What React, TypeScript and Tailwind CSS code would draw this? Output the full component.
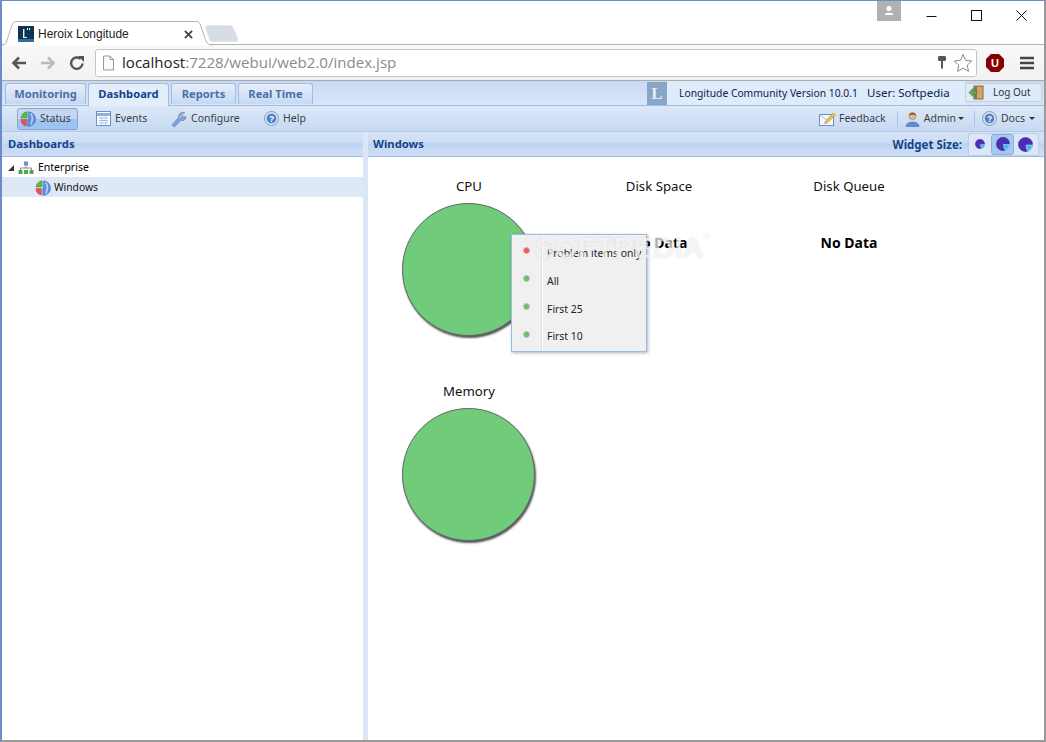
import React from "react";

const F = "[font-family:'Noto_Sans',sans-serif]";
const HEADER =
  "bg-[linear-gradient(#d6e4f7_0%,#cbdcf4_45%,#b9d1f1_50%,#c3d7f3_60%,#cfe0f6_100%)]";

function Pie({ s = 16 }: { s?: number }) {
  return (
    <svg width={s} height={s} viewBox="0 0 16 16" className="shrink-0">
      <path d="M7.2 7 L7.2 .8 A6.6 6.6 0 0 0 .9 7 Z" fill="#58b848" stroke="#3f8f38" strokeWidth="0.4" />
      <path d="M.9 8.4 L6.4 8.4 L6.4 15 A6.8 6.8 0 0 1 .9 8.4 Z" fill="#e4544f" stroke="#b33a38" strokeWidth="0.4" />
      <path d="M8.4 .8 A7.2 7.2 0 0 1 8.4 15.4 Q7.2 15.4 7.6 15 L7.6 8.4 L8.4 7.6 Z" fill="#5d8edb" stroke="#3e6cb0" strokeWidth="0.4" />
      <path d="M10.5 2.5 Q14 6 11 13.5" fill="none" stroke="#bcd3f3" strokeWidth="1.6" />
    </svg>
  );
}

function HelpIcon() {
  return (
    <svg width="15" height="15" viewBox="0 0 15 15" className="shrink-0">
      <circle cx="7.5" cy="7.5" r="7" fill="#d5e1f1" stroke="#7f9cc6" />
      <circle cx="7.5" cy="7.5" r="4.8" fill="#4f80c4" />
      <text x="7.5" y="10.7" fontSize="8.5" fontWeight="700" fill="#fff" textAnchor="middle" fontFamily="Liberation Sans">?</text>
    </svg>
  );
}

function SizeIcon({ s }: { s: number }) {
  return (
    <svg width={s} height={s} viewBox="0 0 16 16">
      <circle cx="8" cy="8" r="7.6" fill="#4b2db8" stroke="#2f2a80" strokeWidth="0.5" />
      <path d="M8.6 8.6 H15.6 A7.4 7.4 0 0 1 10.6 15 Q8.6 13 8.6 8.6 Z" fill="#35bdf2" stroke="#e7f4ff" strokeWidth="0.6" />
    </svg>
  );
}

function Tab({ label, active, w }: { label: string; active?: boolean; w: string }) {
  return (
    <div
      className={`${w} flex justify-center rounded-t-[3px] border border-b-0 border-[#9dbde8] text-[11.2px] leading-[20px] font-bold ${
        active ? "bg-[#e4eefb] h-[23px] text-[#15428b] relative z-10" : "h-[21px] bg-[linear-gradient(#e6eefa,#c6d9f3)] text-[#4b6fa8]"
      }`}
    >
      {label}
    </div>
  );
}

function ToolBtn({ icon, label, active, w }: { icon: React.ReactNode; label: string; active?: boolean; w: string }) {
  return (
    <div
      className={`${w} h-[22px] flex items-center gap-[4px] rounded-[3px] text-[10.5px] text-[#3c3f4a] ${
        active ? "pl-[2px] bg-[linear-gradient(#c3d7f1_50%,#9dc3f0_50%)] border border-[#8aa6cc]" : "pl-[3px]"
      }`}
    >
      {icon}
      {label}
    </div>
  );
}

function Widget({ title, noData }: { title: string; noData?: boolean }) {
  return (
    <div className="w-[190px] h-[205px] flex flex-col items-center pt-[19px]">
      <div className="text-[13.2px] leading-[20px] text-[#111]">{title}</div>
      {noData ? (
        <div className="mt-[37px] text-[14px] leading-[20px] font-bold text-black">No Data</div>
      ) : (
        <div className="mt-[7px] mr-[2px] w-[133px] h-[133px] rounded-full bg-[#70cb7b] border border-[#666] shadow-[1px_2px_2px_#555]" />
      )}
    </div>
  );
}

const menu = [
  { t: "Problem items only", c: "bg-[#ea5a60] border-[#e8a0a4]" },
  { t: "All", c: "bg-[#6fbb6f] border-[#a5d0a5]" },
  { t: "First 25", c: "bg-[#6fbb6f] border-[#a5d0a5]" },
  { t: "First 10", c: "bg-[#6fbb6f] border-[#a5d0a5]" },
];

export default function App() {
  return (
    <div className={`${F} relative w-[1046px] h-[742px] overflow-hidden bg-white flex flex-col border-l-2 border-r-2 border-t border-b-2 border-[#6b8cc6] border-b-[#9a9a9a] border-r-[#9a9a9a]`}>
      {/* title row */}
      <div className="h-[43px] shrink-0 bg-white flex items-end relative">
        <div className="ml-[2px] w-[206px] h-[24px] flex items-center pt-[2px] pl-[14px] pr-[17px] relative -mb-px z-10">
          <svg width="210" height="25" viewBox="0 0 210 25" className="absolute -left-[2px] top-0">
            <path d="M0 24 C3 24 4 22 5 19 L10 4 C11 1 12 .5 15 .5 H194 C196 .5 197 1 198 3 L203 17 C204 21 206 24 210 24" fill="#fff" stroke="#b4b4b4" />
          </svg>
          <svg width="16" height="16" viewBox="0 0 16 16" className="shrink-0 relative">
            <rect width="16" height="16" fill="#0e3550" />
            <rect x="5" y="3" width="1.4" height="9" fill="#cfe" />
            <rect x="5" y="11" width="4" height="1" fill="#cfe" />
            <rect x="9" y="2" width="1" height="2" fill="#cfe" />
            <rect x="11" y="2" width="1" height="2" fill="#cfe" />
            <rect x="0" y="13" width="16" height="3" fill="#2f6f9f" />
          </svg>
          <span className="relative ml-[4px] text-[12px] text-[#222] [font-family:'Liberation_Sans',sans-serif]">Heroix Longitude</span>
          <svg width="9" height="9" viewBox="0 0 10 10" className="relative ml-auto">
            <path d="M1 1 L9 9 M9 1 L1 9" stroke="#444" strokeWidth="2" />
          </svg>
        </div>
        <svg width="34" height="18" viewBox="0 0 34 18" className="absolute left-[202px] top-[24px]">
          <path d="M3 .5 H26 Q28 .5 29 3 L34 14 Q35 16.5 32 16.5 H8 Q6 16.5 5.5 14 L2 3 Q1.5 .5 3 .5 Z" fill="#d6dbe4" stroke="#e2e5ea" />
        </svg>
        <div className="absolute right-[143px] top-0 w-[24px] h-[20px] bg-[#b1b1b1] flex items-center justify-center">
          <svg width="12" height="12" viewBox="0 0 12 12">
            <circle cx="6" cy="3.5" r="2.5" fill="#fff" />
            <path d="M1.5 10 C2 7 10 7 10.5 10 Z" fill="#fff" />
          </svg>
        </div>
        <div className="absolute right-[17px] top-[9px] flex items-center gap-[34px]">
          <svg width="11" height="12" viewBox="0 0 11 12"><path d="M.5 6.5 H10.5" stroke="#111" /></svg>
          <svg width="11" height="12" viewBox="0 0 11 12"><rect x=".5" y=".5" width="10" height="10" fill="none" stroke="#111" /></svg>
          <svg width="11" height="12" viewBox="0 0 11 12"><path d="M.5 .5 L10.5 10.5 M10.5 .5 L.5 10.5" stroke="#111" /></svg>
        </div>
      </div>
      {/* url bar */}
      <div className="h-[37px] shrink-0 bg-[linear-gradient(#f9f9f9,#f1f1f1)] border-y border-t-[#b4b4b4] border-b-[#aaa] flex items-center">
        <svg width="18" height="18" viewBox="0 0 18 18" className="ml-[8px]">
          <path d="M16 9 H4 M9 3.5 L3.5 9 L9 14.5" fill="none" stroke="#555" strokeWidth="2.6" />
        </svg>
        <svg width="18" height="18" viewBox="0 0 18 18" className="ml-[11px]">
          <path d="M2 9 H14 M9 3.5 L14.5 9 L9 14.5" fill="none" stroke="#bbb" strokeWidth="2.6" />
        </svg>
        <svg width="18" height="18" viewBox="0 0 18 18" className="ml-[11px]">
          <path d="M14.5 9.5 A5.7 5.7 0 1 1 12.6 4.9" fill="none" stroke="#555" strokeWidth="2.4" />
          <path d="M10 2 H16 V8 Z" fill="#555" />
        </svg>
        <div className="ml-[9px] w-[882px] h-[28px] bg-white border border-[#c4c4c4] rounded-[3px] flex items-center pl-[6px]">
          <svg width="13" height="16" viewBox="0 0 13 16">
            <path d="M1.5 1 H8 L11.5 4.5 V15 H1.5 Z" fill="#fafafa" stroke="#999" />
            <path d="M8 1 V4.5 H11.5" fill="none" stroke="#999" />
          </svg>
          <span className="ml-[7px] text-[15.1px] text-[#222] [font-family:'Open_Sans',sans-serif]">
            localhost<span className="text-[#8a8a8a]">:7228/webui/web2.0/index.jsp</span>
          </span>
          <svg width="10" height="16" viewBox="0 0 10 16" className="ml-auto">
            <path d="M2 1 H8 Q9 1 9 2.5 V5 Q9 6 7 6 H6 V13 L5 14 L4 13 V6 H3 Q1 6 1 5 V2.5 Q1 1 2 1 Z" fill="#555" />
          </svg>
          <svg width="20" height="20" viewBox="0 0 20 20" className="ml-[6px] mr-[3px]">
            <path d="M10 1.5 L12.6 7.3 L18.8 8 L14.2 12.2 L15.5 18.4 L10 15.2 L4.5 18.4 L5.8 12.2 L1.2 8 L7.4 7.3 Z" fill="#fff" stroke="#888" />
          </svg>
        </div>
        <svg width="20" height="20" viewBox="0 0 20 20" className="ml-[8px]">
          <path d="M6 1 H14 L19 6 V14 L14 19 H6 L1 14 V6 Z" fill="#800" />
          <text x="10" y="14" fontSize="11" fontWeight="700" textAnchor="middle" fill="#fff" fontFamily="Liberation Sans">U</text>
        </svg>
        <svg width="14" height="14" viewBox="0 0 14 14" className="ml-[15px]">
          <path d="M0 2 H14 M0 7 H14 M0 12 H14" stroke="#444" strokeWidth="2.4" />
        </svg>
      </div>

      {/* App tabs */}
      <div className="h-[25px] shrink-0 bg-[linear-gradient(#c8daf2,#d8e6f8)] border-b border-[#9dbde8] flex items-start pt-[2px] pl-[3px] gap-[2px] relative">
        <Tab label="Monitoring" w="w-[81px]" />
        <Tab label="Dashboard" w="w-[81px]" active />
        <Tab label="Reports" w="w-[65px]" />
        <Tab label="Real Time" w="w-[75px]" />
        <div className="absolute left-[665px] top-0 w-[298px] h-[24px] bg-[#deebfb]" />
        <div className="absolute left-[645px] top-[1px] w-[20px] h-[23px] bg-[#88a6c6] flex items-center justify-center text-[#e6eef7] font-bold text-[17px] [font-family:'Liberation_Serif',serif]">L</div>
        <div className="absolute left-[677px] top-[1px] h-[24px] flex items-center text-[10.3px] text-[#10204a]">
          Longitude Community Version 10.0.1
        </div>
        <div className="absolute left-[865px] top-0 h-[24px] flex items-center text-[11.5px] text-[#10204a]">User: Softpedia</div>
        <div className="absolute left-[963px] top-[2px] w-[77px] h-[19px] bg-[#ddeafb] border border-[#cfcfc8] rounded-[2px] flex items-center pl-[2px] text-[10px] text-[#333]">
          <svg width="16" height="15" viewBox="0 0 16 15">
            <rect x="6" y="1" width="9" height="13" fill="#d9a55c" stroke="#8d6b33" />
            <rect x="6" y="1" width="3" height="13" fill="#7b7b70" />
            <path d="M1 7.5 L5 3.5 V6 H9 V9 H5 V11.5 Z" fill="#6caa4c" stroke="#3d7530" strokeWidth="0.6" />
          </svg>
          <span className="ml-[9px]">Log Out</span>
        </div>
      </div>

      {/* Toolbar */}
      <div className="h-[26px] shrink-0 bg-[linear-gradient(#dde8f8,#c6d9f1)] border-b border-[#b4cbe8] flex items-center pl-[15px]">
        <ToolBtn icon={<Pie />} label="Status" active w="w-[61px]" />
        <div className="w-[15px]" />
        <ToolBtn
          w="w-[66px]"
          label="Events"
          icon={
            <svg width="15" height="15" viewBox="0 0 15 15" className="shrink-0">
              <rect x=".5" y=".5" width="14" height="14" fill="#fff" stroke="#6a90c4" />
              <path d="M1 3.5 H14" stroke="#8fb0dc" strokeWidth="3" />
              <path d="M3 7 H12 M3 9.5 H12 M3 12 H12" stroke="#97b6de" />
              <path d="M5.5 5 V14 M9.5 5 V14" stroke="#c5d7ee" />
            </svg>
          }
        />
        <div className="w-[9px]" />
        <ToolBtn
          w="w-[90px]"
          label="Configure"
          icon={
            <svg width="16" height="16" viewBox="0 0 17 17" className="shrink-0">
              <path d="M1.5 14 L8 7 C7.5 3.5 10.5 .8 14.5 1.5 L12 4.5 L13 6.5 L16 6 C16 9 13 11 10.5 10 L4 16.5 C3 17 1 16 1.5 14 Z" fill="#7ea4d8" stroke="#5a78a8" strokeWidth="0.6" />
              <path d="M9 7 L14 2.5" stroke="#b9bcc4" strokeWidth="1.6" />
            </svg>
          }
        />
        <div className="w-[3px]" />
        <ToolBtn w="w-[60px]" label="Help" icon={<HelpIcon />} />
        <div className="ml-auto flex items-center h-full text-[10.5px] text-[#3c3f4a]">
          <svg width="17" height="14" viewBox="0 0 17 14" className="mr-[3px]">
            <rect x="0.5" y="2.5" width="14" height="11" fill="#f5f8ff" stroke="#6a90c4" />
            <path d="M.5 2.5 L7.5 8 L14.5 2.5" fill="none" stroke="#9db8dd" />
            <path d="M6 10 L14 1 L16.5 3 L8 11 L5.5 11.5 Z" fill="#f0c040" stroke="#a87f20" strokeWidth="0.5" />
          </svg>
          Feedback
          <div className="w-px h-[16px] bg-[#a9c4e6] ml-[11px] mr-[7px]" />
          <svg width="15" height="16" viewBox="0 0 15 16" className="mr-[4px]">
            <circle cx="7.5" cy="5" r="3.5" fill="#e8b88e" stroke="#8d5c36" strokeWidth="0.5" />
            <path d="M4 4.5 C4 1 11 1 11 4.5 C9 3 6 3 4 4.5 Z" fill="#7a4a24" />
            <path d="M1 15.5 C1 9.5 14 9.5 14 15.5 Z" fill="#5b8fd8" stroke="#3e6cb0" strokeWidth="0.6" />
          </svg>
          Admin
          <span className="ml-[2px] w-0 h-0 border-x-[3px] border-x-transparent border-t-[3px] border-t-[#333]" />
          <div className="w-px h-[16px] bg-[#a9c4e6] ml-[10px] mr-[7px]" />
          <HelpIcon />
          <span className="ml-[4px]">Docs</span>
          <span className="ml-[4px] mr-[9px] w-0 h-0 border-x-[3px] border-x-transparent border-t-[3px] border-t-[#333]" />
        </div>
      </div>

      {/* Panels */}
      <div className="flex-1 flex min-h-0 bg-[#dbe6f6]">
        <div className="w-[361px] shrink-0 flex flex-col bg-white">
          <div className={`h-[25px] shrink-0 ${HEADER} border-b border-[#9dbde8] pl-[6px] flex items-center text-[11.3px] font-bold text-[#15428b]`}>
            Dashboards
          </div>
          <div className="h-[20px] pt-[1px] flex items-center pl-[6px] text-[10.5px] text-black">
            <span className="w-0 h-0 border-l-[6px] border-l-transparent border-b-[6px] border-b-[#333] mr-[4px]" />
            <svg width="16" height="14" viewBox="0 0 16 14" className="mr-[4px]">
              <rect x="6" y="0.5" width="4" height="4" fill="#6a90c4" />
              <path d="M8 4.5 V7 M2.5 9 V7 H13.5 V9" fill="none" stroke="#888" />
              <rect x="0.5" y="9" width="4" height="4" fill="#4ea84e" />
              <rect x="6" y="9" width="4" height="4" fill="#4ea84e" />
              <rect x="11.5" y="9" width="4" height="4" fill="#4ea84e" />
            </svg>
            Enterprise
          </div>
          <div className="h-[20px] pt-[1px] bg-[#dfe8f6] flex items-center pl-[33px] gap-[3px] text-[10.3px] text-[#111]">
            <Pie />
            Windows
          </div>
        </div>
        <div className="w-[5px] shrink-0" />
        <div className="flex-1 flex flex-col bg-white min-w-0">
          <div className={`h-[25px] shrink-0 ${HEADER} border-b border-[#9dbde8] pl-[5px] flex items-center text-[11.3px] font-bold text-[#15428b]`}>
            Windows
            <span className="ml-auto mr-[6px] pt-[1px] text-[11.5px]">Widget Size:</span>
            <div className="h-[23px] w-[71px] mr-[5px] flex items-center bg-[#dbe7f7] border border-[#b9cfea] rounded-[2px]">
              {[10, 14, 15].map((s, i) => (
                <div key={s} className={`${i === 0 ? "w-[22px]" : "w-[23px]"} h-[21px] flex items-center justify-center rounded-[3px] ${i === 1 ? "bg-[#a5c8f0] border border-[#8fb0dc]" : ""}`}>
                  <SizeIcon s={s} />
                </div>
              ))}
            </div>
          </div>
          <div className="flex flex-wrap content-start pl-[6px] w-[600px]">
            <Widget title="CPU" />
            <Widget title="Disk Space" noData />
            <Widget title="Disk Queue" noData />
            <Widget title="Memory" />
          </div>
        </div>
      </div>

      {/* Context menu */}
      <div className="absolute left-[509px] top-[233px] w-[136px] h-[118px] bg-[#f0f0f0] border border-[#99bbe8] shadow-[1px_1px_3px_rgba(0,0,0,0.3)] flex flex-col pt-[5px]">
        <div className="absolute left-[29px] top-0 bottom-0 w-[2px] bg-white border-l border-[#e0e0e0]" />
        {menu.map((m) => (
          <div key={m.t} className="h-[28px] flex items-center text-[10.4px] text-[#222]">
            <span className={`ml-[11px] -mt-[6px] w-[7px] h-[7px] rounded-full border ${m.c}`} />
            <span className="ml-[17px]">{m.t}</span>
          </div>
        ))}
      </div>
      {/* Watermark */}
      <div className="absolute left-[533px] top-[232px] text-[29.5px] leading-none font-bold text-white/70 [text-shadow:0_0_2px_rgba(0,0,0,0.14)] pointer-events-none [font-family:'Liberation_Sans',sans-serif]">
        SOFTPEDIA<span className="align-top text-[8px]">®</span>
      </div>
    </div>
  );
}
